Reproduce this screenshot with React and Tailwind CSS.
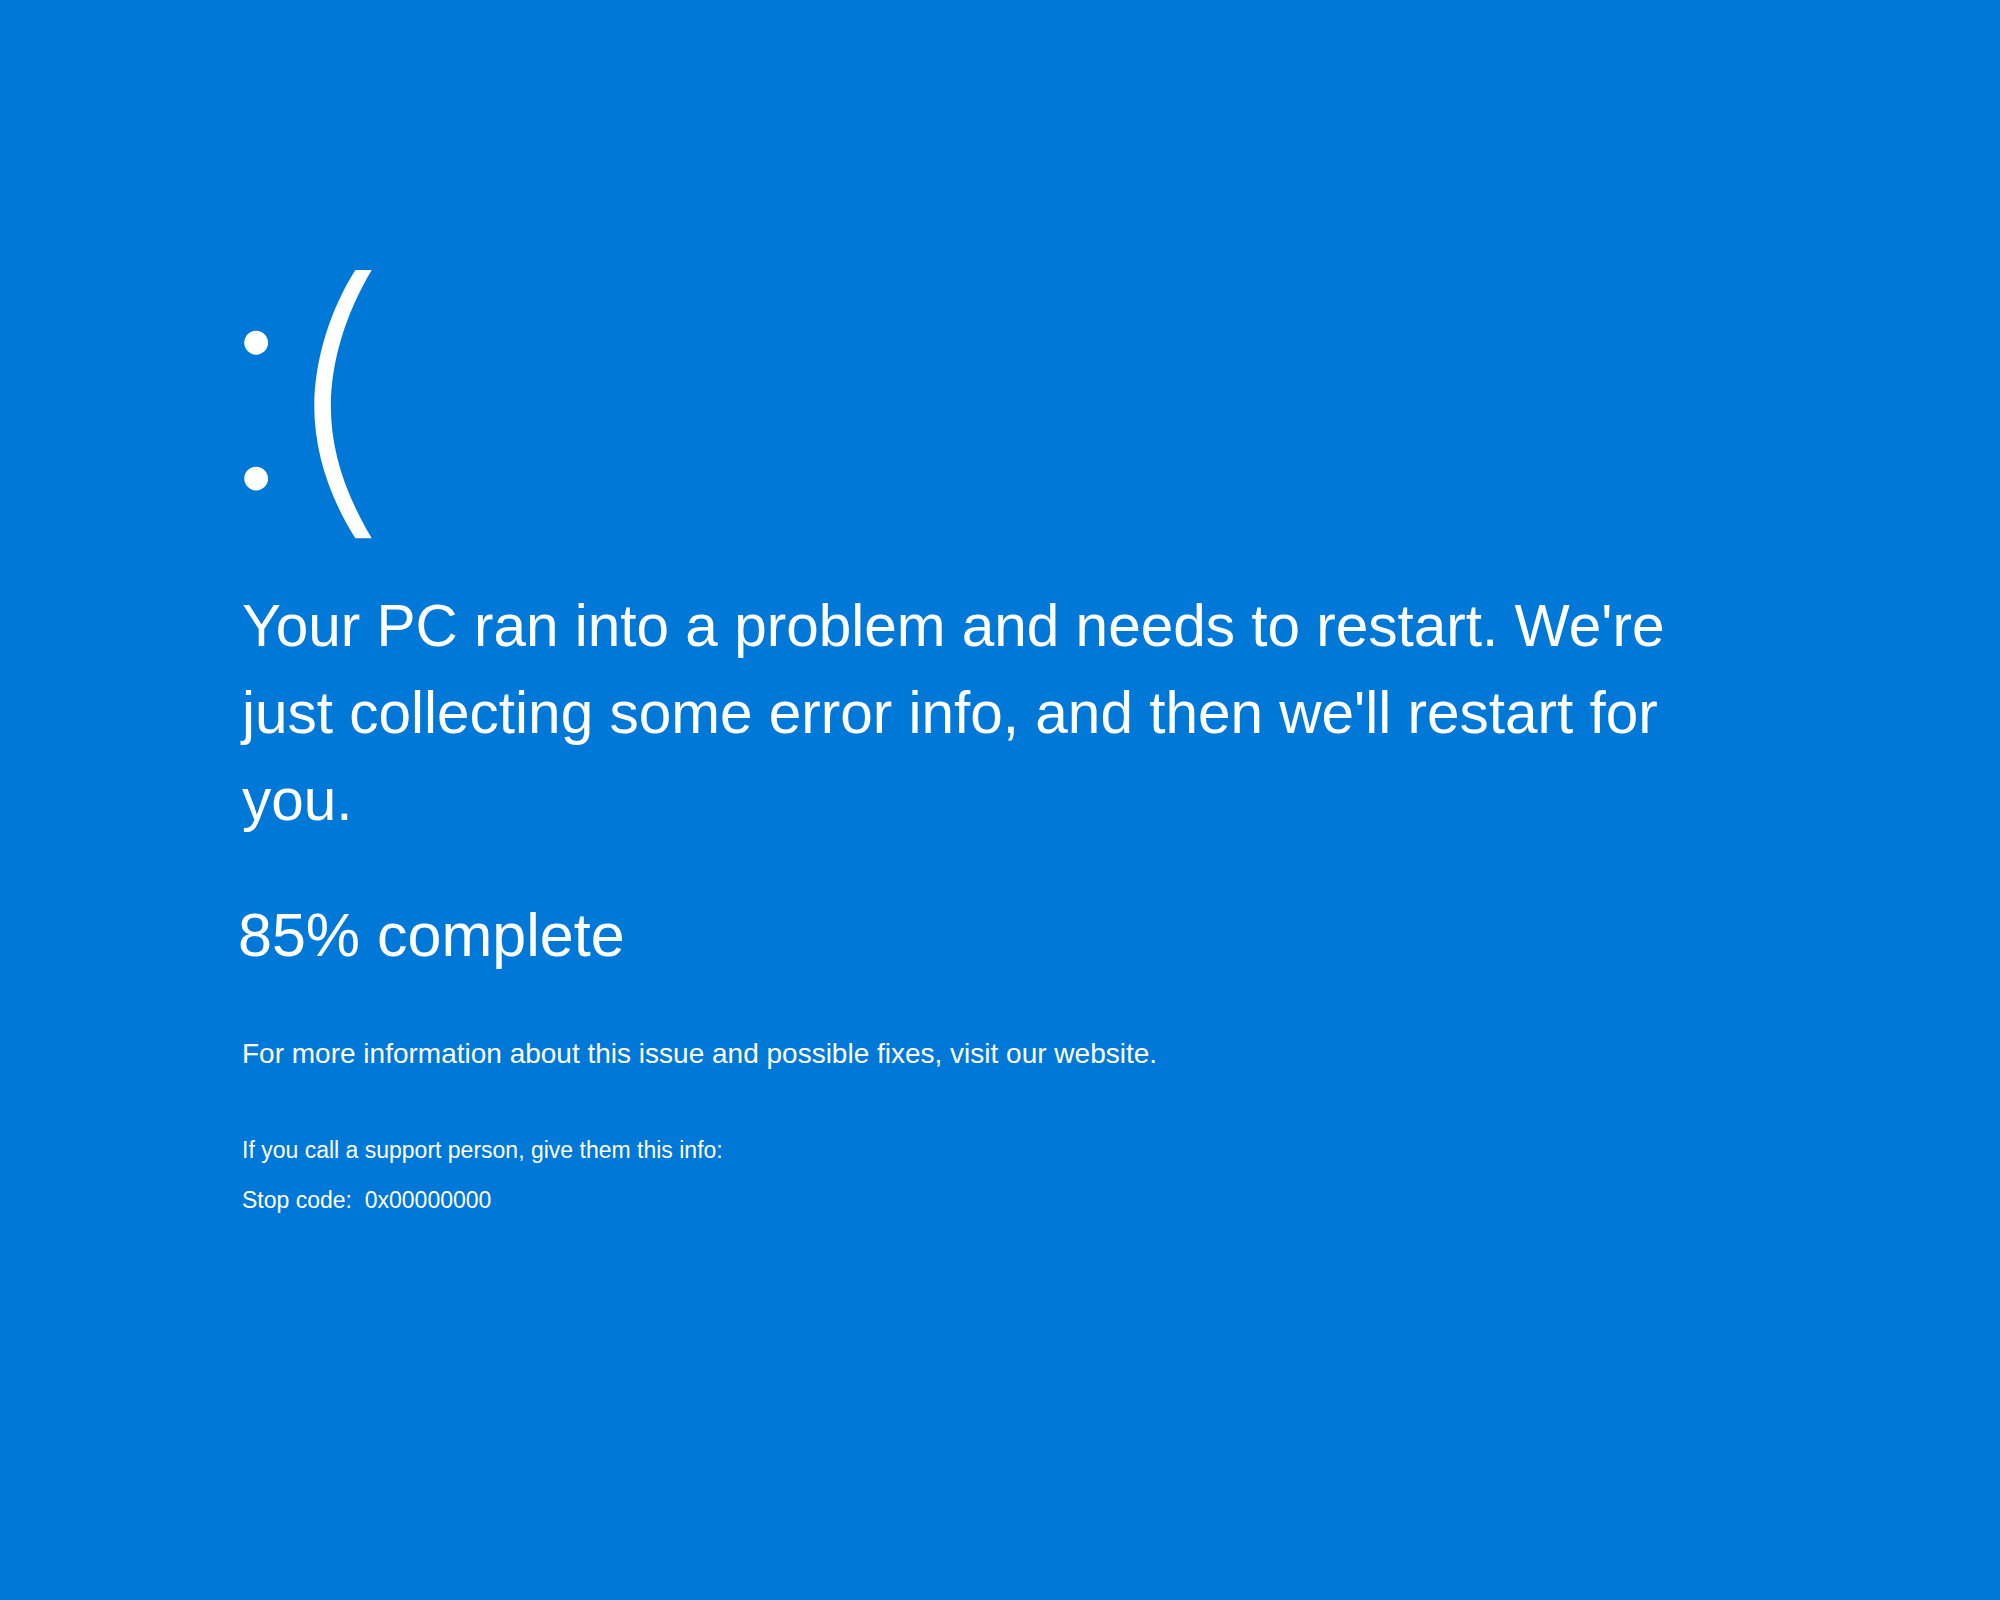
import React from 'react';

const App = () => {
  return (
    <div className="min-h-[1600px] w-full bg-[#0078d7] text-white font-['Liberation_Sans',Arial,sans-serif]">
      <div className="pl-[242px] pt-[215px] flex flex-col">
        {/* sad face */}
        <div className="flex items-start h-[367px] font-['Inter',sans-serif]">
          <span className="block w-[59px] mt-[11px] -ml-[28px] font-extralight text-[305px] leading-none">:</span>
          <span className="block mt-[28px] origin-left scale-x-[1.24] font-extralight text-[295px] leading-none">(</span>
        </div>
        <p className="max-w-[1480px] text-[58.5px] leading-[87px]">
          Your PC ran into a problem and needs to restart. We're just collecting some error info, and then we'll restart for you.
        </p>
        <p className="mt-[57px] -ml-[4px] text-[61px] leading-[70px]">85% complete</p>
        <p className="mt-[67px] text-[28px] leading-[34px]">
          For more information about this issue and possible fixes, visit our website.
        </p>
        <p className="mt-[64px] text-[23px] leading-[30px]">If you call a support person, give them this info:</p>
        <p className="mt-[20px] text-[23px] leading-[30px]">Stop code:&nbsp; 0x00000000</p>
      </div>
    </div>
  );
};

export default App;
